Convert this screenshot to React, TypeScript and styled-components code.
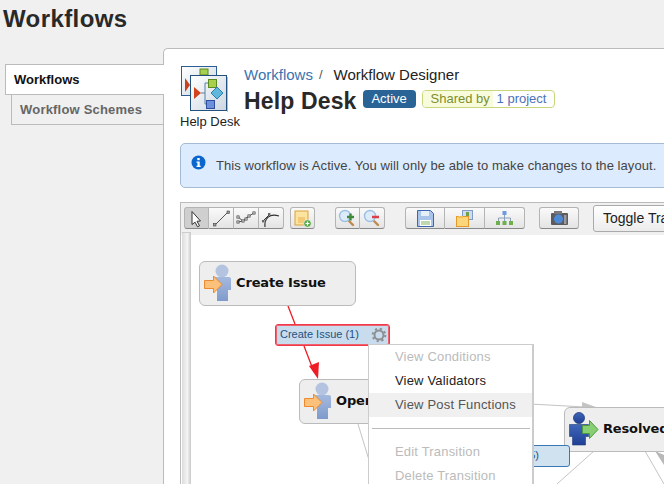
import React from "react";
import styled, { createGlobalStyle } from "styled-components";

const Global = createGlobalStyle`
  html, body { margin: 0; padding: 0; background: #f0f0f0; }
  body { font-family: "Liberation Sans", Arial, sans-serif; color: #333; }
`;

const Page = styled.div`
  width: 664px; height: 484px; overflow: hidden; display: flex; flex-direction: column; background: #f0f0f0;
`;
const PageTitle = styled.h1`
  margin: 0; height: 48px; padding: 5px 0 0 3px; box-sizing: border-box;
  font-size: 24px; line-height: 28px; font-weight: bold; color: #292929; letter-spacing: 0.4px;
`;
const Layout = styled.div`display: flex; flex: 1; min-height: 0;`;
const Sidebar = styled.nav`
  width: 163px; flex: none; padding: 16px 0 0 5px; box-sizing: border-box;
  display: flex; flex-direction: column; position: relative; z-index: 1;
`;
const Tab = styled.a<{ $active?: boolean }>`
  display: block; box-sizing: border-box; font-size: 13px; font-weight: bold; line-height: 15px;
  height: 31px;
  border: 1px solid #bbb; border-right: 0;
  margin-left: ${p => (p.$active ? "0" : "6px")};
  margin-right: ${p => (p.$active ? "-1px" : "0")};
  margin-top: ${p => (p.$active ? "0" : "-1px")};
  padding: 7px 0 0 8px;
  background: ${p => (p.$active ? "#fff" : "transparent")};
  color: ${p => (p.$active ? "#111" : "#666")};
  letter-spacing: ${p => (p.$active ? "0" : "0.2px")};
`;
const Main = styled.main`
  flex: 1; min-width: 0; background: #fff; border: 1px solid #bbb; border-width: 1px 0 0 1px;
  border-top-left-radius: 5px; padding: 16px 0 0 16px; overflow: hidden; box-sizing: border-box;
`;
const Header = styled.header`display: flex; height: 78px;`;
const ProjectIcon = styled.div`width: 64px; flex: none; display: flex; flex-direction: column;`;
const WorkflowSvg = styled.svg`margin-left: 1px; flex: none;`;
const ProjectName = styled.span`font-size: 13px; line-height: 15px; color: #222; margin-top: 2px; white-space: nowrap;`;
const HeaderText = styled.div`padding-top: 1px;`;
const Crumbs = styled.div`font-size: 15px; line-height: 18px; color: #222; white-space: nowrap; display: flex;`;
const CrumbLink = styled.a`color: #3b73af;`;
const CrumbSep = styled.span`color: #555; margin: 0 11px 0 6px; font-size: 13px;`;
const TitleRow = styled.div`display: flex; align-items: flex-start; margin-top: 1px; height: 28px;`;
const Title = styled.h2`margin: 2px 0 0; font-size: 23px; line-height: 28px; font-weight: bold; color: #292929; white-space: nowrap; letter-spacing: 0.15px;`;
const StatusBadge = styled.span`
  margin: 5px 0 0 6px; height: 18px; width: 53px; box-sizing: border-box; border-radius: 4px; background: #2a6396;
  color: #fff; font-size: 13px; line-height: 18px; text-align: center;
`;
const SharedBadge = styled.span`
  margin: 5px 0 0 6px; height: 18px; width: 133px; box-sizing: border-box; display: flex; overflow: hidden;
  border: 1px solid #c8d77c; border-radius: 4px; font-size: 13px; line-height: 16px; white-space: nowrap;
`;
const SharedLabel = styled.span`background: #f8fbdc; color: #7d8f2c; padding-left: 8px; width: 70px; flex: none; box-sizing: border-box;`;
const SharedValue = styled.span`color: #4d71b8; padding-left: 4px;`;
const Info = styled.div`
  width: 560px; height: 45px; box-sizing: border-box; background: #dcebfd; border: 1px solid #a5bbd3; border-radius: 5px;
  display: flex; align-items: center; padding-left: 10px; font-size: 13px; color: #444; white-space: nowrap;
`;
const InfoGlyph = styled.svg`margin-top: -6px; flex: none;`;
const InfoText = styled.span`margin-left: 10px; letter-spacing: 0.07px;`;
const Frame = styled.section`
  width: 560px; height: 300px; margin-top: 14px; border: 1px solid #bbb; border-right: 0; border-bottom: 0; box-sizing: border-box;
`;
const Toolbar = styled.div`
  height: 32px; background: #f0f0f0; display: flex; align-items: center; padding: 0 0 2px 3px; box-sizing: border-box;
`;
const Group = styled.div<{ $gap?: number }>`
  display: flex; height: 22px; margin-right: ${p => p.$gap ?? 0}px;
`;
const ToolButton = styled.button<{ $w: number; $pressed?: boolean }>`
  width: ${p => p.$w}px; height: 22px; padding: 0; margin: 0; box-sizing: border-box;
  display: flex; align-items: center; justify-content: center;
  border: 1px solid #b4b4b4; border-bottom-color: #888; border-left-width: 0;
  background: ${p => (p.$pressed ? "#cfcfcf" : "linear-gradient(#fafafa, #e4e4e4)")};
  &:first-child { border-left-width: 1px; border-radius: 3px 0 0 3px; }
  &:last-child { border-radius: 0 3px 3px 0; }
  &:only-child { border-radius: 3px; }
`;
const ToggleButton = styled.button`
  width: 100px; height: 27px; padding: 0 0 0 9px; text-align: left; box-sizing: border-box; white-space: nowrap;
  border: 1px solid #aaa; border-radius: 3px; background: linear-gradient(#fff, #ececec);
  font: 14px "Liberation Sans", Arial, sans-serif; color: #222; overflow: hidden;
`;
const Workspace = styled.div`display: flex; height: 249px;`;
const Gutter = styled.div`
  width: 9px; flex: none; margin: -3px 0 0 1px; position: relative;
  background: linear-gradient(90deg, #dcdcdc, #f4f4f4 60%, #c8c8c8); box-sizing: border-box; border-top: 1px solid #ccc;
`;
const Canvas = styled.div`flex: 1; position: relative; background: #fff;`;
const Links = styled.svg`position: absolute; left: 0; top: 0;`;
const Node = styled.div<{ $x: number; $y: number; $w: number }>`
  position: absolute; left: ${p => p.$x}px; top: ${p => p.$y}px; width: ${p => p.$w}px; height: 45px; box-sizing: border-box;
  background: #eee; border: 1px solid #bbb; border-radius: 6px; display: flex; align-items: center; white-space: nowrap;
  font: bold 13px "DejaVu Sans", sans-serif; color: #111; letter-spacing: -0.15px;
`;
const NodeLabel = styled.span`margin-bottom: 2px;`;
const NodeIcon = styled.svg<{ $w: number }>`width: ${p => p.$w}px; height: 43px; flex: none;`;
const Transition = styled.div<{ $x: number; $y: number; $w: number; $selected?: boolean }>`
  position: absolute; left: ${p => p.$x}px; top: ${p => p.$y}px; width: ${p => p.$w}px; height: 22px; box-sizing: border-box;
  background: ${p => (p.$selected ? "#c9dcee" : "#d0e1f0")};
  border: 1px solid ${p => (p.$selected ? "#f0384a" : "#3c78b5")};
  ${p => p.$selected && "box-shadow: 0 0 0 1px #f0616e inset;"}
  border-radius: 3px; font-size: 11px; line-height: 18px; color: #24517f; padding-left: 4px; white-space: nowrap;
  display: flex; justify-content: space-between;
`;
const TransitionEnd = styled.span`margin-left: auto; padding-right: 30px;`;
const Gear = styled.svg`width: 16px; height: 16px; margin: 2px 2px 0 0; flex: none;`;
const Menu = styled.ul`
  position: absolute; left: 177px; top: 109px; width: 166px; height: 150px; margin: 0; padding: 0; list-style: none; box-sizing: border-box;
  background: #fff; border: 1px solid #ccc; border-right-width: 2px; font-size: 13px; letter-spacing: 0.18px;
`;
const MenuItem = styled.li<{ $disabled?: boolean; $hover?: boolean }>`
  height: 24px; line-height: 24px; padding-left: 26px; white-space: nowrap;
  color: ${p => (p.$disabled ? "#bbb" : p.$hover ? "#555" : "#222")};
  background: ${p => (p.$hover ? "#f0f0f0" : "transparent")};
`;
const MenuDivider = styled.li`height: 1px; background: #bbb; margin: 11px 2px 11px 3px;`;

const WorkflowIcon = () => (
  <WorkflowSvg width="47" height="47" viewBox="0 0 47 47">
    <defs>
      <linearGradient id="pg" x1="0" y1="0" x2="1" y2="1">
        <stop offset="0" stopColor="#fff" />
        <stop offset="1" stopColor="#ccd6e2" />
      </linearGradient>
    </defs>
    <rect x="0.5" y="1.5" width="35" height="29" fill="url(#pg)" stroke="#2b5e94" />
    <rect x="19" y="4" width="8" height="6" fill="#a6d04e" stroke="#5c8a1e" />
    <path d="M4 13l5 7-5 7z" fill="#c8401c" />
    <rect x="46" y="12" width="1" height="35" fill="#bbb" />
    <rect x="9.500" y="10.500" width="36" height="35" fill="url(#pg)" stroke="#23517f" />
    <path d="M20 28h4M24 18v21M24 18h3M24 39h2" stroke="#5a7fa5" strokeWidth="1" fill="none" />
    <rect x="27.500" y="14.500" width="8" height="8" fill="#a6d04e" stroke="#5c8a1e" />
    <path d="M13 22l7 6-7 6z" fill="#d0431c" />
    <path d="M36 22l6 6-6 6-6-6z" fill="#5fb7dc" stroke="#2b7fae" />
    <rect x="25.500" y="35.500" width="8" height="8" fill="#6e8fdc" stroke="#2f4f9e" />
  </WorkflowSvg>
);

const InfoIcon = () => (
  <InfoGlyph width="15" height="15" viewBox="0 0 15 15">
    <circle cx="7.500" cy="7.500" r="7" fill="#0a66cc" />
    <rect x="6.300" y="3" width="2.400" height="2.200" fill="#fff" />
    <path d="M5.500 6.500h3.200v4.300h1v1.200H5.500v-1.200h1V7.700h-1z" fill="#fff" />
  </InfoGlyph>
);

const Arrow = () => (
  <svg width="19" height="19" viewBox="0 0 19 19">
    <path d="M5 2.500l8.500 9.500-3.500.300 2.500 4.500-2 1-2.400-4.600L5 15.500z" fill="#fff" stroke="#333" strokeWidth="1" strokeLinejoin="round" />
  </svg>
);
const LineIcon = () => (
  <svg width="19" height="19" viewBox="0 0 19 19">
    <path d="M3 16L16 3" stroke="#555" />
    <rect x="1.500" y="14.500" width="2.500" height="2.500" fill="#999" stroke="#444" strokeWidth=".6" />
    <rect x="15" y="2" width="2.500" height="2.500" fill="#999" stroke="#444" strokeWidth=".6" />
  </svg>
);
const SegIcon = () => (
  <svg width="20" height="19" viewBox="0 0 20 19">
    <path d="M2 8l5 4 6-5 5-3M2 13l5-1 6-5" stroke="#555" fill="none" />
    {[[2, 8], [7, 12], [13, 7], [18, 4], [2, 13], [10, 10]].map(([x, y]) => (
      <rect key={`${x}${y}`} x={x - 1.2} y={y - 1.2} width="2.400" height="2.400" fill="#aaa" stroke="#444" strokeWidth=".5" />
    ))}
  </svg>
);
const CurveIcon = () => (
  <svg width="20" height="19" viewBox="0 0 20 19">
    <path d="M4 18C3 10 8 4 18 7" stroke="#333" strokeWidth="1.200" fill="none" />
    <path d="M2 12l6-6" stroke="#333" />
    <rect x="1" y="11" width="2.400" height="2.400" fill="#666" />
    <rect x="7" y="4" width="2.400" height="2.400" fill="#666" />
  </svg>
);
const NoteIcon = () => (
  <svg width="19" height="19" viewBox="0 0 19 19">
    <rect x="2" y="2" width="13" height="14" fill="#fbe3a0" stroke="#dba13a" />
    <rect x="5" y="8" width="7" height="6" fill="#f0b95a" opacity=".6" />
    <circle cx="14.500" cy="14.500" r="3.800" fill="#5ba84a" stroke="#fff" strokeWidth=".6" />
    <path d="M12.500 14.500h4M14.500 12.500v4" stroke="#fff" strokeWidth="1.200" />
  </svg>
);
const ZoomIcon = ({ plus }: { plus?: boolean }) => (
  <svg width="19" height="19" viewBox="0 0 19 19">
    <path d="M11 12l4 4" stroke="#c08a4c" strokeWidth="2.400" strokeLinecap="round" />
    <circle cx="7" cy="7" r="5.500" fill="#dcebfa" stroke="#9cc0e4" strokeWidth="1.400" />
    {plus ? (
      <path d="M9 8h7M12.500 4.500v7" stroke="#3f8a3a" strokeWidth="2.400" />
    ) : (
      <path d="M9 8h7" stroke="#d9404a" strokeWidth="2.600" />
    )}
  </svg>
);
const SaveIcon = () => (
  <svg width="17" height="17" viewBox="0 0 17 17">
    <path d="M.5.500h13l3 3v13H.5z" fill="#a9c4ea" stroke="#3c66b0" />
    <rect x="4" y="1" width="8" height="5" fill="#e6eef8" />
    <rect x="3" y="10" width="11" height="6" fill="#fff" />
    <path d="M4 12h9M4 14h9" stroke="#7cb45c" strokeWidth="1.200" />
  </svg>
);
const OpenIcon = () => (
  <svg width="18" height="17" viewBox="0 0 18 17">
    <rect x="6.500" y=".5" width="10" height="9" fill="#cfdcef" stroke="#7f9cc7" />
    <rect x="10" y="2" width="3" height="5" fill="#6fa04a" />
    <rect x=".5" y="6.500" width="12" height="10" fill="#fbd67a" stroke="#e39a2b" />
    <rect x="2" y="6" width="5" height="2" fill="#f3bf55" />
  </svg>
);
const TreeIcon = () => (
  <svg width="17" height="14" viewBox="0 0 17 14">
    <path d="M8.500 4v3M2.500 10V7h12v3M8.500 7v3" stroke="#8aa0bb" fill="none" />
    <rect x="6.500" y="0" width="4" height="4" fill="#6f9ae0" />
    <rect x="0" y="10" width="4" height="4" fill="#6db04c" />
    <rect x="6.500" y="10" width="4" height="4" fill="#6db04c" />
    <rect x="13" y="10" width="4" height="4" fill="#6db04c" />
  </svg>
);
const CameraIcon = () => (
  <svg width="17" height="14" viewBox="0 0 17 14">
    <rect x="0" y="2" width="17" height="12" rx="1" fill="#5b5b60" />
    <rect x="3" y="0" width="8" height="3" fill="#77777c" />
    <circle cx="7.500" cy="8" r="4.500" fill="#4d8ad6" />
    <rect x="13" y="4" width="2.500" height="9" fill="#9a9aa0" />
  </svg>
);

const SourcePerson = ({ id }: { id: string }) => (
  <NodeIcon $w={36} viewBox="0 0 36 43">
    <defs>
      <linearGradient id={id} x1="0" y1="0" x2="0" y2="1">
        <stop offset="0" stopColor="#a5b9de" />
        <stop offset="1" stopColor="#7f9bcb" />
      </linearGradient>
    </defs>
    <circle cx="22" cy="9" r="6.500" fill="#b4c4e0" />
    <path d="M14 15h15q2 0 2 2v11h-3v11h-11V28h-4z" fill={`url(#${id})`} />
    <path d="M4.500 18.500h9v-4.500l8.500 8.500-8.500 8.500v-4.500h-9z" fill="#fbc07a" stroke="#ee8a2e" />
  </NodeIcon>
);
const TargetPerson = () => (
  <NodeIcon $w={38} viewBox="0 0 38 43">
    <defs>
      <linearGradient id="tp" x1="0" y1="0" x2="0" y2="1">
        <stop offset="0" stopColor="#3f66b8" />
        <stop offset="1" stopColor="#1e3f96" />
      </linearGradient>
    </defs>
    <circle cx="14" cy="10" r="5.500" fill="url(#tp)" stroke="#1f3a7a" strokeWidth=".8" />
    <path d="M4.500 16.500h19v12h-3v8.500h-13v-8.500h-3z" fill="url(#tp)" stroke="#1f3a7a" strokeWidth=".6" />
    <path d="M17.500 17.500h7v-5l8.500 9-8.500 9v-5h-7z" fill="#88cf74" stroke="#4d9a3e" />
  </NodeIcon>
);
const GearIcon = () => (
  <Gear viewBox="0 0 16 16">
    <circle cx="8" cy="8" r="4.500" fill="none" stroke="#8d9093" strokeWidth="2" />
    <circle cx="8" cy="8" r="6.300" fill="none" stroke="#8d9093" strokeWidth="2" strokeDasharray="2.200 2.750" />
  </Gear>
);

export default function App() {
  return (
    <Page>
      <Global />
      <PageTitle>Workflows</PageTitle>
      <Layout>
        <Sidebar>
          <Tab $active>Workflows</Tab>
          <Tab>Workflow Schemes</Tab>
        </Sidebar>
        <Main>
          <Header>
            <ProjectIcon>
              <WorkflowIcon />
              <ProjectName>Help Desk</ProjectName>
            </ProjectIcon>
            <HeaderText>
              <Crumbs>
                <CrumbLink>Workflows</CrumbLink>
                <CrumbSep>/</CrumbSep>
                <span>Workflow Designer</span>
              </Crumbs>
              <TitleRow>
                <Title>Help Desk</Title>
                <StatusBadge>Active</StatusBadge>
                <SharedBadge>
                  <SharedLabel>Shared by</SharedLabel>
                  <SharedValue>1 project</SharedValue>
                </SharedBadge>
              </TitleRow>
            </HeaderText>
          </Header>
          <Info>
            <InfoIcon />
            <InfoText>This workflow is Active. You will only be able to make changes to the layout.</InfoText>
          </Info>
          <Frame>
            <Toolbar>
              <Group $gap={6}>
                <ToolButton $w={25} $pressed><Arrow /></ToolButton>
                <ToolButton $w={25}><LineIcon /></ToolButton>
                <ToolButton $w={25}><SegIcon /></ToolButton>
                <ToolButton $w={25}><CurveIcon /></ToolButton>
              </Group>
              <Group $gap={20}>
                <ToolButton $w={25}><NoteIcon /></ToolButton>
              </Group>
              <Group $gap={20}>
                <ToolButton $w={25}><ZoomIcon plus /></ToolButton>
                <ToolButton $w={25}><ZoomIcon /></ToolButton>
              </Group>
              <Group $gap={14}>
                <ToolButton $w={40}><SaveIcon /></ToolButton>
                <ToolButton $w={40}><OpenIcon /></ToolButton>
                <ToolButton $w={40}><TreeIcon /></ToolButton>
              </Group>
              <Group $gap={14}>
                <ToolButton $w={40}><CameraIcon /></ToolButton>
              </Group>
              <ToggleButton>Toggle Transition Labels</ToggleButton>
            </Toolbar>
            <Workspace>
              <Gutter />
              <Canvas>
                <Links width="473" height="249" viewBox="191 235 473 249">
                  <g stroke="#c4c4c4" strokeWidth="1" fill="none">
                    <path d="M358 424L372 470" />
                    <path d="M530 404L585 407" />
                    <path d="M594 451L557 484" />
                    <path d="M645 451L664 484" />
                  </g>
                  <path d="M582 402L596 407L582 407z" fill="#c4c4c4" />
                  <path d="M655 451L664 455L664 465z" fill="#b8b8b8" />
                  <path d="M288 306L295 324M304 346L314 372" stroke="#f01c24" strokeWidth="1.300" fill="none" />
                  <path d="M309 366L318 379L319 362z" fill="#f01c24" />
                </Links>
                <Node $x={8} $y={26} $w={157}>
                  <SourcePerson id="sp1" />
                  <NodeLabel>Create Issue</NodeLabel>
                </Node>
                <Node $x={108} $y={144} $w={120}>
                  <SourcePerson id="sp2" />
                  <NodeLabel>Open</NodeLabel>
                </Node>
                <Node $x={373} $y={172} $w={120}>
                  <TargetPerson />
                  <NodeLabel>Resolved</NodeLabel>
                </Node>
                <Transition $x={84} $y={89} $w={115} $selected>
                  Create Issue (1)
                  <GearIcon />
                </Transition>
                <Transition $x={300} $y={210} $w={79}>
                  <TransitionEnd>(5)</TransitionEnd>
                </Transition>
                <Menu>
                  <MenuItem $disabled>View Conditions</MenuItem>
                  <MenuItem>View Validators</MenuItem>
                  <MenuItem $hover>View Post Functions</MenuItem>
                  <MenuDivider />
                  <MenuItem $disabled>Edit Transition</MenuItem>
                  <MenuItem $disabled>Delete Transition</MenuItem>
                </Menu>
              </Canvas>
            </Workspace>
          </Frame>
        </Main>
      </Layout>
    </Page>
  );
}
